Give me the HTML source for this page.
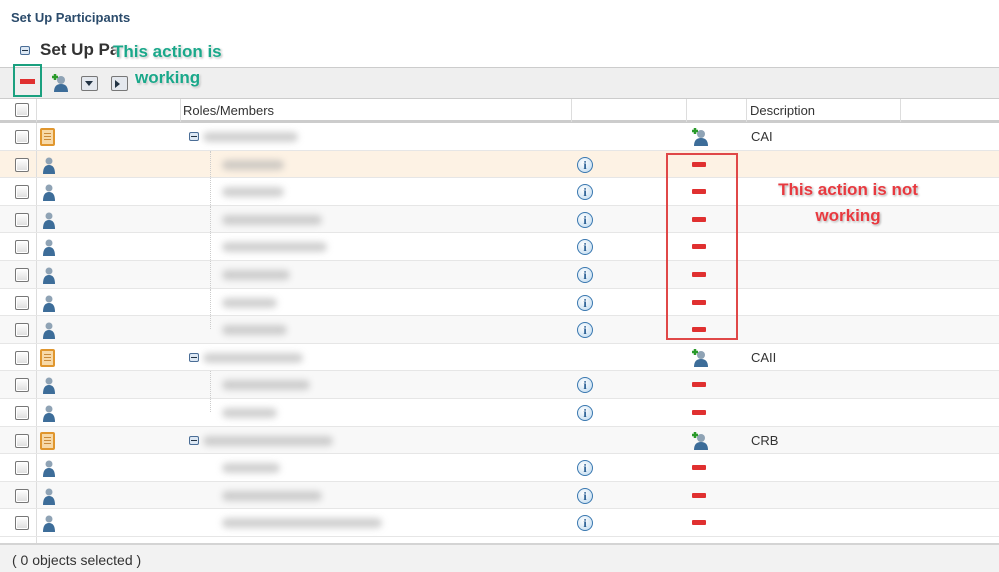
<!DOCTYPE html>
<html><head><meta charset="utf-8"><style>
*{margin:0;padding:0;box-sizing:border-box}
body{width:999px;height:572px;overflow:hidden;background:#fff;font-family:"Liberation Sans",sans-serif;position:relative;color:#333}
.a{position:absolute}
.row{position:absolute;left:0;width:999px;height:27.6px;border-bottom:1px solid #e6e6e6}
.cb{position:absolute;left:15px;top:7px;width:14px;height:14px;border:1px solid #777;border-radius:2px;background:linear-gradient(#fff,#ddd);box-shadow:inset 0 0 0 1px #fff}
.vl{position:absolute;left:36px;top:0;bottom:0;border-left:1px solid #ddd}
.blur{position:absolute;height:10px;background:#aaa;filter:blur(3.5px);opacity:.55;border-radius:5px}
.info{position:absolute;left:577px;top:6px;width:16px;height:16px;border-radius:50%;border:1px solid #3a78b0;background:radial-gradient(circle at 40% 35%,#fff,#bcd8ee);font:bold 12px "Liberation Serif",serif;color:#2a5f94;text-align:center;line-height:14px}
.minus{position:absolute;left:692px;top:11px;width:14px;height:5px;background:#e03030;border-radius:1px}
.person{position:absolute;left:43px;top:5px;width:12px;height:18px}
.scroll{position:absolute;left:40px;top:5px;width:15px;height:18px;background:#f7d9a8;border:2px solid #e0962e;border-radius:2px}
.scroll:after{content:"";position:absolute;left:2px;right:2px;top:3px;height:8px;background:repeating-linear-gradient(#c98a3a 0 1px,transparent 1px 3px)}
.add{position:absolute;left:691px;top:4px}
.desc{position:absolute;left:751px;top:6px;font-size:13px;color:#333}
.coll{position:absolute;left:189px;top:9px;width:10px;height:9px;border:1px solid #4a6d96;border-radius:2px;background:#dde8f4}
.coll:after{content:"";position:absolute;left:1px;right:1px;top:3px;height:1px;background:#234}
.tl{position:absolute;left:210px;top:0;bottom:0;border-left:1px dotted #ccc}
</style></head><body>
<div class="a" style="left:11px;top:10px;font-weight:bold;font-size:13px;color:#2b4b6b">Set Up Participants</div>
<div class="a coll" style="left:20px;top:46px;position:absolute"></div>
<div class="a" style="left:40px;top:40px;font-weight:bold;font-size:17px;color:#333">Set Up Pa</div>
<div class="a" style="left:0;top:67px;width:999px;height:32px;background:#efefef;border-top:1px solid #ccc;border-bottom:1px solid #ccc"></div>
<div class="a" style="left:20px;top:79px;width:15px;height:5px;background:#e03030"></div>
<div class="a" style="left:13px;top:64px;width:29px;height:33px;border:2px solid #1aa07f"></div>
<svg class="a" style="left:51px;top:73px" width="18" height="20"><circle cx="10" cy="7" r="4" fill="#8fa3b5"/><path d="M3 19 Q3 11 10 11 Q17 11 17 19Z" fill="#3d6d99"/><path d="M1 4h6M4 1v6" stroke="#2a9a2a" stroke-width="2.5"/></svg>
<div class="a" style="left:81px;top:76px;width:17px;height:15px;border:1px solid #777;border-radius:2px;background:#e4e8ee"><div style="position:absolute;left:3px;top:4px;border-left:4px solid transparent;border-right:4px solid transparent;border-top:5px solid #234"></div></div>
<div class="a" style="left:111px;top:76px;width:17px;height:15px;border:1px solid #777;border-radius:2px;background:#e4e8ee"><div style="position:absolute;left:3px;top:3px;border-top:4px solid transparent;border-bottom:4px solid transparent;border-left:5px solid #234"></div></div>
<div class="a" style="left:113px;top:39px;font-weight:bold;font-size:17px;color:#1aa88a;line-height:26px;text-shadow:0 0 3px #fff,0 0 3px #fff,1px 1px 2px #888">This action is<br><span style="padding-left:22px">working</span></div>
<!-- header -->
<div class="a" style="left:0;top:99px;width:999px;height:24px;background:#fff;border-bottom:3px solid #ccc"></div>
<div class="a cb" style="left:15px;top:103px"></div>
<div class="a" style="left:36px;top:99px;height:23px;border-left:1px solid #ddd"></div>
<div class="a" style="left:180px;top:99px;height:23px;border-left:1px solid #ddd"></div>
<div class="a" style="left:571px;top:99px;height:23px;border-left:1px solid #ddd"></div>
<div class="a" style="left:686px;top:99px;height:23px;border-left:1px solid #ddd"></div>
<div class="a" style="left:746px;top:99px;height:23px;border-left:1px solid #ddd"></div>
<div class="a" style="left:900px;top:99px;height:23px;border-left:1px solid #ddd"></div>
<div class="a" style="left:183px;top:103px;font-size:13px">Roles/Members</div>
<div class="a" style="left:750px;top:103px;font-size:13px">Description</div>
<!-- rows -->
<div class="row" style="top:123px"><div class="vl"></div><div class="cb"></div><div class="scroll"></div><div class="coll"></div><div class="blur" style="left:203px;top:9px;width:95px"></div><svg class="add" width="18" height="20"><circle cx="10" cy="7" r="4" fill="#8fa3b5"/><path d="M3 19 Q3 11 10 11 Q17 11 17 19Z" fill="#3d6d99"/><path d="M1 4h6M4 1v6" stroke="#2a9a2a" stroke-width="2.5"/></svg><div class="desc">CAI</div></div>
<div class="row" style="top:150.6px;background:#fdf2e4"><div class="vl"></div><div class="cb"></div><div class="tl"></div><svg class="person" viewBox="0 0 12 18"><circle cx="6" cy="5" r="3.5" fill="#8fa3b5"/><path d="M0 18Q0 9 6 9Q12 9 12 18Z" fill="#3d6d99"/></svg><div class="blur" style="left:222px;top:9px;width:62px"></div><div class="info">i</div><div class="minus"></div></div>
<div class="row" style="top:178.2px"><div class="vl"></div><div class="cb"></div><div class="tl"></div><svg class="person" viewBox="0 0 12 18"><circle cx="6" cy="5" r="3.5" fill="#8fa3b5"/><path d="M0 18Q0 9 6 9Q12 9 12 18Z" fill="#3d6d99"/></svg><div class="blur" style="left:222px;top:9px;width:62px"></div><div class="info">i</div><div class="minus"></div></div>
<div class="row" style="top:205.8px;background:#f8f8f8"><div class="vl"></div><div class="cb"></div><div class="tl"></div><svg class="person" viewBox="0 0 12 18"><circle cx="6" cy="5" r="3.5" fill="#8fa3b5"/><path d="M0 18Q0 9 6 9Q12 9 12 18Z" fill="#3d6d99"/></svg><div class="blur" style="left:222px;top:9px;width:100px"></div><div class="info">i</div><div class="minus"></div></div>
<div class="row" style="top:233.4px"><div class="vl"></div><div class="cb"></div><div class="tl"></div><svg class="person" viewBox="0 0 12 18"><circle cx="6" cy="5" r="3.5" fill="#8fa3b5"/><path d="M0 18Q0 9 6 9Q12 9 12 18Z" fill="#3d6d99"/></svg><div class="blur" style="left:222px;top:9px;width:105px"></div><div class="info">i</div><div class="minus"></div></div>
<div class="row" style="top:261px;background:#f8f8f8"><div class="vl"></div><div class="cb"></div><div class="tl"></div><svg class="person" viewBox="0 0 12 18"><circle cx="6" cy="5" r="3.5" fill="#8fa3b5"/><path d="M0 18Q0 9 6 9Q12 9 12 18Z" fill="#3d6d99"/></svg><div class="blur" style="left:222px;top:9px;width:68px"></div><div class="info">i</div><div class="minus"></div></div>
<div class="row" style="top:288.6px"><div class="vl"></div><div class="cb"></div><div class="tl"></div><svg class="person" viewBox="0 0 12 18"><circle cx="6" cy="5" r="3.5" fill="#8fa3b5"/><path d="M0 18Q0 9 6 9Q12 9 12 18Z" fill="#3d6d99"/></svg><div class="blur" style="left:222px;top:9px;width:55px"></div><div class="info">i</div><div class="minus"></div></div>
<div class="row" style="top:316.2px;background:#f8f8f8"><div class="vl"></div><div class="cb"></div><div class="tl" style="bottom:14px"></div><svg class="person" viewBox="0 0 12 18"><circle cx="6" cy="5" r="3.5" fill="#8fa3b5"/><path d="M0 18Q0 9 6 9Q12 9 12 18Z" fill="#3d6d99"/></svg><div class="blur" style="left:222px;top:9px;width:65px"></div><div class="info">i</div><div class="minus"></div></div>
<div class="row" style="top:343.8px"><div class="vl"></div><div class="cb"></div><div class="scroll"></div><div class="coll"></div><div class="blur" style="left:203px;top:9px;width:100px"></div><svg class="add" width="18" height="20"><circle cx="10" cy="7" r="4" fill="#8fa3b5"/><path d="M3 19 Q3 11 10 11 Q17 11 17 19Z" fill="#3d6d99"/><path d="M1 4h6M4 1v6" stroke="#2a9a2a" stroke-width="2.5"/></svg><div class="desc">CAII</div></div>
<div class="row" style="top:371.4px;background:#f8f8f8"><div class="vl"></div><div class="cb"></div><div class="tl"></div><svg class="person" viewBox="0 0 12 18"><circle cx="6" cy="5" r="3.5" fill="#8fa3b5"/><path d="M0 18Q0 9 6 9Q12 9 12 18Z" fill="#3d6d99"/></svg><div class="blur" style="left:222px;top:9px;width:88px"></div><div class="info">i</div><div class="minus"></div></div>
<div class="row" style="top:399px"><div class="vl"></div><div class="cb"></div><div class="tl" style="bottom:14px"></div><svg class="person" viewBox="0 0 12 18"><circle cx="6" cy="5" r="3.5" fill="#8fa3b5"/><path d="M0 18Q0 9 6 9Q12 9 12 18Z" fill="#3d6d99"/></svg><div class="blur" style="left:222px;top:9px;width:55px"></div><div class="info">i</div><div class="minus"></div></div>
<div class="row" style="top:426.6px;background:#f8f8f8"><div class="vl"></div><div class="cb"></div><div class="scroll"></div><div class="coll"></div><div class="blur" style="left:203px;top:9px;width:130px"></div><svg class="add" width="18" height="20"><circle cx="10" cy="7" r="4" fill="#8fa3b5"/><path d="M3 19 Q3 11 10 11 Q17 11 17 19Z" fill="#3d6d99"/><path d="M1 4h6M4 1v6" stroke="#2a9a2a" stroke-width="2.5"/></svg><div class="desc">CRB</div></div>
<div class="row" style="top:454.2px"><div class="vl"></div><div class="cb"></div><svg class="person" viewBox="0 0 12 18"><circle cx="6" cy="5" r="3.5" fill="#8fa3b5"/><path d="M0 18Q0 9 6 9Q12 9 12 18Z" fill="#3d6d99"/></svg><div class="blur" style="left:222px;top:9px;width:58px"></div><div class="info">i</div><div class="minus"></div></div>
<div class="row" style="top:481.8px;background:#f8f8f8"><div class="vl"></div><div class="cb"></div><svg class="person" viewBox="0 0 12 18"><circle cx="6" cy="5" r="3.5" fill="#8fa3b5"/><path d="M0 18Q0 9 6 9Q12 9 12 18Z" fill="#3d6d99"/></svg><div class="blur" style="left:222px;top:9px;width:100px"></div><div class="info">i</div><div class="minus"></div></div>
<div class="row" style="top:509.4px"><div class="vl"></div><div class="cb"></div><svg class="person" viewBox="0 0 12 18"><circle cx="6" cy="5" r="3.5" fill="#8fa3b5"/><path d="M0 18Q0 9 6 9Q12 9 12 18Z" fill="#3d6d99"/></svg><div class="blur" style="left:222px;top:9px;width:160px"></div><div class="info">i</div><div class="minus"></div></div>
<div class="a" style="left:0;top:537px;width:999px;height:7px;background:#fff"><div class="vl"></div></div>
<div class="a" style="left:0;top:543px;width:999px;height:29px;background:#f2f2f2;border-top:2px solid #d4d4d4"></div>
<div class="a" style="left:12px;top:552px;font-size:14px;color:#333">( 0 objects selected )</div>
<!-- annotations -->
<div class="a" style="left:666px;top:153px;width:72px;height:187px;border:2px solid #e04848"></div>
<div class="a" style="left:772px;top:177px;width:152px;text-align:center;font-weight:bold;font-size:17px;line-height:26px;color:#e8393f;text-shadow:0 0 2px #fff,1px 1px 2px #999">This action is not<br>working</div>
</body></html>
